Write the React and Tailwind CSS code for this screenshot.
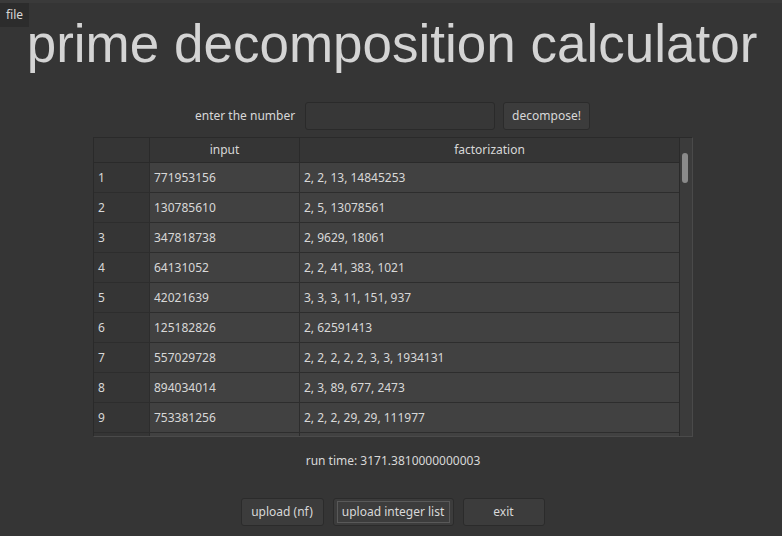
const rows = [
  ["771953156", "2, 2, 13, 14845253"],
  ["130785610", "2, 5, 13078561"],
  ["347818738", "2, 9629, 18061"],
  ["64131052", "2, 2, 41, 383, 1021"],
  ["42021639", "3, 3, 3, 11, 151, 937"],
  ["125182826", "2, 62591413"],
  ["557029728", "2, 2, 2, 2, 2, 3, 3, 1934131"],
  ["894034014", "2, 3, 89, 677, 2473"],
  ["753381256", "2, 2, 2, 29, 29, 111977"],
  ["", ""],
];

function Btn({ children, className = "", focus = false }) {
  return (
    <button
      className={`flex h-[28px] items-center justify-center whitespace-nowrap rounded-[3px] border border-[#2b2b2b] bg-[#3c3c3c] text-[12px] text-[#d8d8d8] ${className}`}
    >
      {focus ? (
        <span className="mx-[3px] block flex-1 border border-[#595959] py-[1px] leading-[18px]">{children}</span>
      ) : (
        children
      )}
    </button>
  );
}

export default function App() {
  return (
    <div
      className="flex h-[536px] w-[782px] flex-col bg-[#353535] text-[#d8d8d8]"
      style={{ fontFamily: '"Noto Sans", sans-serif' }}
    >
      <div className="h-[3px] bg-[#3a3a3a]" />
      <div className="flex h-[24px]">
        <div className="flex w-[29px] items-center justify-center bg-[#2c2c2c] text-[12px]">file</div>
      </div>

      <h1
        className="mt-[-9px] pl-[2px] text-center text-[53px] leading-[52px] text-[#d4d4d4]"
        style={{ fontFamily: '"Liberation Sans", Arial, sans-serif' }}
      >
        prime decomposition calculator
      </h1>

      <div className="mt-[32px] flex h-[28px] items-center">
        <span className="ml-[195px] w-[110px] whitespace-nowrap text-[12px]">enter the number</span>
        <div className="h-[28px] w-[190px] rounded-[3px] border border-[#2a2a2a] bg-[#373737]" />
        <Btn className="ml-[8px] w-[87px]">decompose!</Btn>
      </div>

      <div className="ml-[93px] mt-[7px] flex h-[300px] w-[600px] border border-[#2a2a2a] border-r-[#4a4a4a] border-b-[#4a4a4a] bg-[#353535]">
        <div className="flex-1 overflow-hidden">
          <div className="flex h-[25px] border-b border-[#2a2a2a] bg-[#353535] text-[12px]">
            <div className="w-[56px] border-r border-[#2a2a2a]" />
            <div className="flex w-[150px] items-center justify-center border-r border-[#2a2a2a]">input</div>
            <div className="flex flex-1 items-center justify-center">factorization</div>
          </div>
          {rows.map((r, i) => (
            <div key={i} className="flex h-[30px] border-b border-[#2d2d2d] text-[12px]">
              <div className="flex w-[56px] items-center border-r border-[#2d2d2d] bg-[#353535] pl-[4px]">
                {r[0] ? i + 1 : ""}
              </div>
              <div className="flex w-[150px] items-center border-r border-[#2d2d2d] bg-[#414141] pl-[4px]">{r[0]}</div>
              <div className="flex flex-1 items-center bg-[#414141] pl-[4px]">{r[1]}</div>
            </div>
          ))}
        </div>
        <div className="w-[13px] border-l border-[#2a2a2a] bg-[#3b3b3b] pl-[2px] pt-[15px]">
          <div className="h-[30px] w-[6px] rounded-full bg-[#8a8a8a]" />
        </div>
      </div>

      <div className="mt-[15px] pl-[4px] text-center text-[12px] leading-[18px]">run time: 3171.3810000000003</div>

      <div className="mt-[28px] flex justify-center gap-[9px] pl-[3px]">
        <Btn className="w-[83px]">upload (nf)</Btn>
        <Btn className="w-[121px]" focus>upload integer list</Btn>
        <Btn className="w-[82px]">exit</Btn>
      </div>
    </div>
  );
}
